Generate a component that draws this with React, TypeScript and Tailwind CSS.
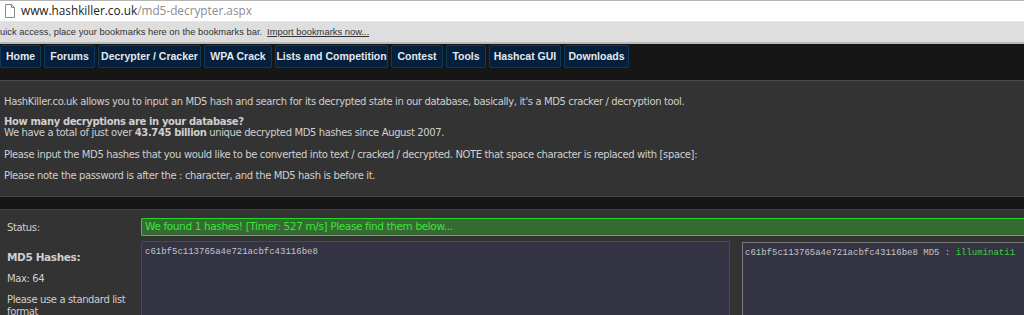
const navItems = [
  { label: "Home", w: "w-[41px]" },
  { label: "Forums", w: "w-[51px]" },
  { label: "Decrypter / Cracker", w: "w-[103px]" },
  { label: "WPA Crack", w: "w-[68px]" },
  { label: "Lists and Competition", w: "w-[113px]" },
  { label: "Contest", w: "w-[52px]" },
  { label: "Tools", w: "w-[40px]" },
  { label: "Hashcat GUI", w: "w-[72px]" },
  { label: "Downloads", w: "w-[65px]" },
];

function PageIcon() {
  return (
    <svg width="12" height="14" viewBox="0 0 12 14" className="shrink-0">
      <path d="M1.5 0.5h6l3 3v10h-9z" fill="#fff" stroke="#8a8a8a" />
      <path d="M7.5 0.5v3h3" fill="none" stroke="#8a8a8a" />
    </svg>
  );
}

export default function App() {
  return (
    <div className="h-[315px] w-[1024px] overflow-hidden bg-[#181818] font-['Liberation_Sans',Arial,sans-serif]">
      {/* browser chrome */}
      <div className="flex h-[21px] items-center gap-[5px] border-t border-[#b5b5b5] bg-white pl-[4px] font-['Open_Sans',sans-serif] text-[11.8px]">
        <PageIcon />
        <span className="text-[#222]">
          www.hashkiller.co.uk<span className="text-[#8c8c8c]">/md5-decrypter.aspx</span>
        </span>
      </div>
      <div className="flex h-[23px] items-center gap-[5px] border-t border-[#e6e6e6] border-b-2 border-b-[#b9b9b9] bg-[#dedede] text-[9.4px] text-[#333]">
        <span>uick access, place your bookmarks here on the bookmarks bar.</span>
        <span className="underline">Import bookmarks now...</span>
      </div>

      {/* nav */}
      <div className="flex h-[36px] items-start gap-[3px] bg-[#161616] pt-[1px]">
        {navItems.map((n) => (
          <div
            key={n.label}
            className={`${n.w} flex h-[23px] items-center justify-center rounded-[2px] border border-[#0e3a5c] bg-[#05203d] text-[10.5px] font-bold text-[#e4e8ee]`}
          >
            {n.label}
          </div>
        ))}
      </div>

      {/* intro panel */}
      <div className="flex h-[116px] flex-col border-t border-[#4a4a4a] bg-[#333333] px-[4px] pt-[14px] font-['DejaVu_Sans',Verdana,sans-serif] text-[10px] tracking-[-0.37px] text-[#cfcfcf]">
        <p className="leading-[13px]">
          HashKiller.co.uk allows you to input an MD5 hash and search for its decrypted state in our database, basically, it's a MD5 cracker / decryption tool.
        </p>
        <p className="mt-[8px] font-bold leading-[11px]">How many decryptions are in your database?</p>
        <p className="leading-[12px]">
          We have a total of just over <b>43.745 billion</b> unique decrypted MD5 hashes since August 2007.
        </p>
        <p className="mt-[9px] leading-[13px]">
          Please input the MD5 hashes that you would like to be converted into text / cracked / decrypted. NOTE that space character is replaced with [space]:
        </p>
        <p className="mt-[8px] leading-[13px]">Please note the password is after the : character, and the MD5 hash is before it.</p>
      </div>

      <div className="h-[13px] border-t border-[#474747] bg-[#161616]" />

      {/* form panel */}
      <div className="flex border-t border-[#3e3e3e] bg-[#333333] pt-[8px] font-['DejaVu_Sans',Verdana,sans-serif] text-[10px] tracking-[-0.37px] text-[#cfcfcf]">
        <div className="w-[141px] shrink-0 pl-[7px]">
          <div className="flex h-[18px] items-center">Status:</div>
          <div className="mt-[14px] text-[10.5px] font-bold leading-[14px]">MD5 Hashes:</div>
          <div className="mt-[8px] leading-[14px]">Max: 64</div>
          <div className="mt-[8px] leading-[12px]">
            Please use a standard list
            <br />
            format
          </div>
        </div>
        <div className="flex-1">
          <div className="flex h-[18px] items-center rounded-l-[2px] border border-r-0 border-[#2bd22b] bg-[#356a33] pl-[3px] text-[10.5px] text-[#39e639]">
            We found 1 hashes! [Timer: 527 m/s] Please find them below...
          </div>
          <div className="mt-[5px] flex gap-[12px] tracking-normal">
            <div className="h-[80px] w-[589px] rounded-[2px] border border-[#2e4f86] bg-[#333344] px-[3px] pt-[4px] font-['Liberation_Mono',monospace] text-[9px] text-[#c4c4c4]">
              c61bf5c113765a4e721acbfc43116be8
            </div>
            <div className="mt-[1px] h-[80px] flex-1 border border-r-0 border-[#7a7a7a] bg-[#333344] px-[2px] pt-[4px] font-['Liberation_Mono',monospace] text-[9px] whitespace-nowrap text-[#c4c4c4]">
              c61bf5c113765a4e721acbfc43116be8 MD5 : <span className="text-[#3fce3f]">illuminati1</span>
            </div>
          </div>
        </div>
      </div>
    </div>
  );
}
